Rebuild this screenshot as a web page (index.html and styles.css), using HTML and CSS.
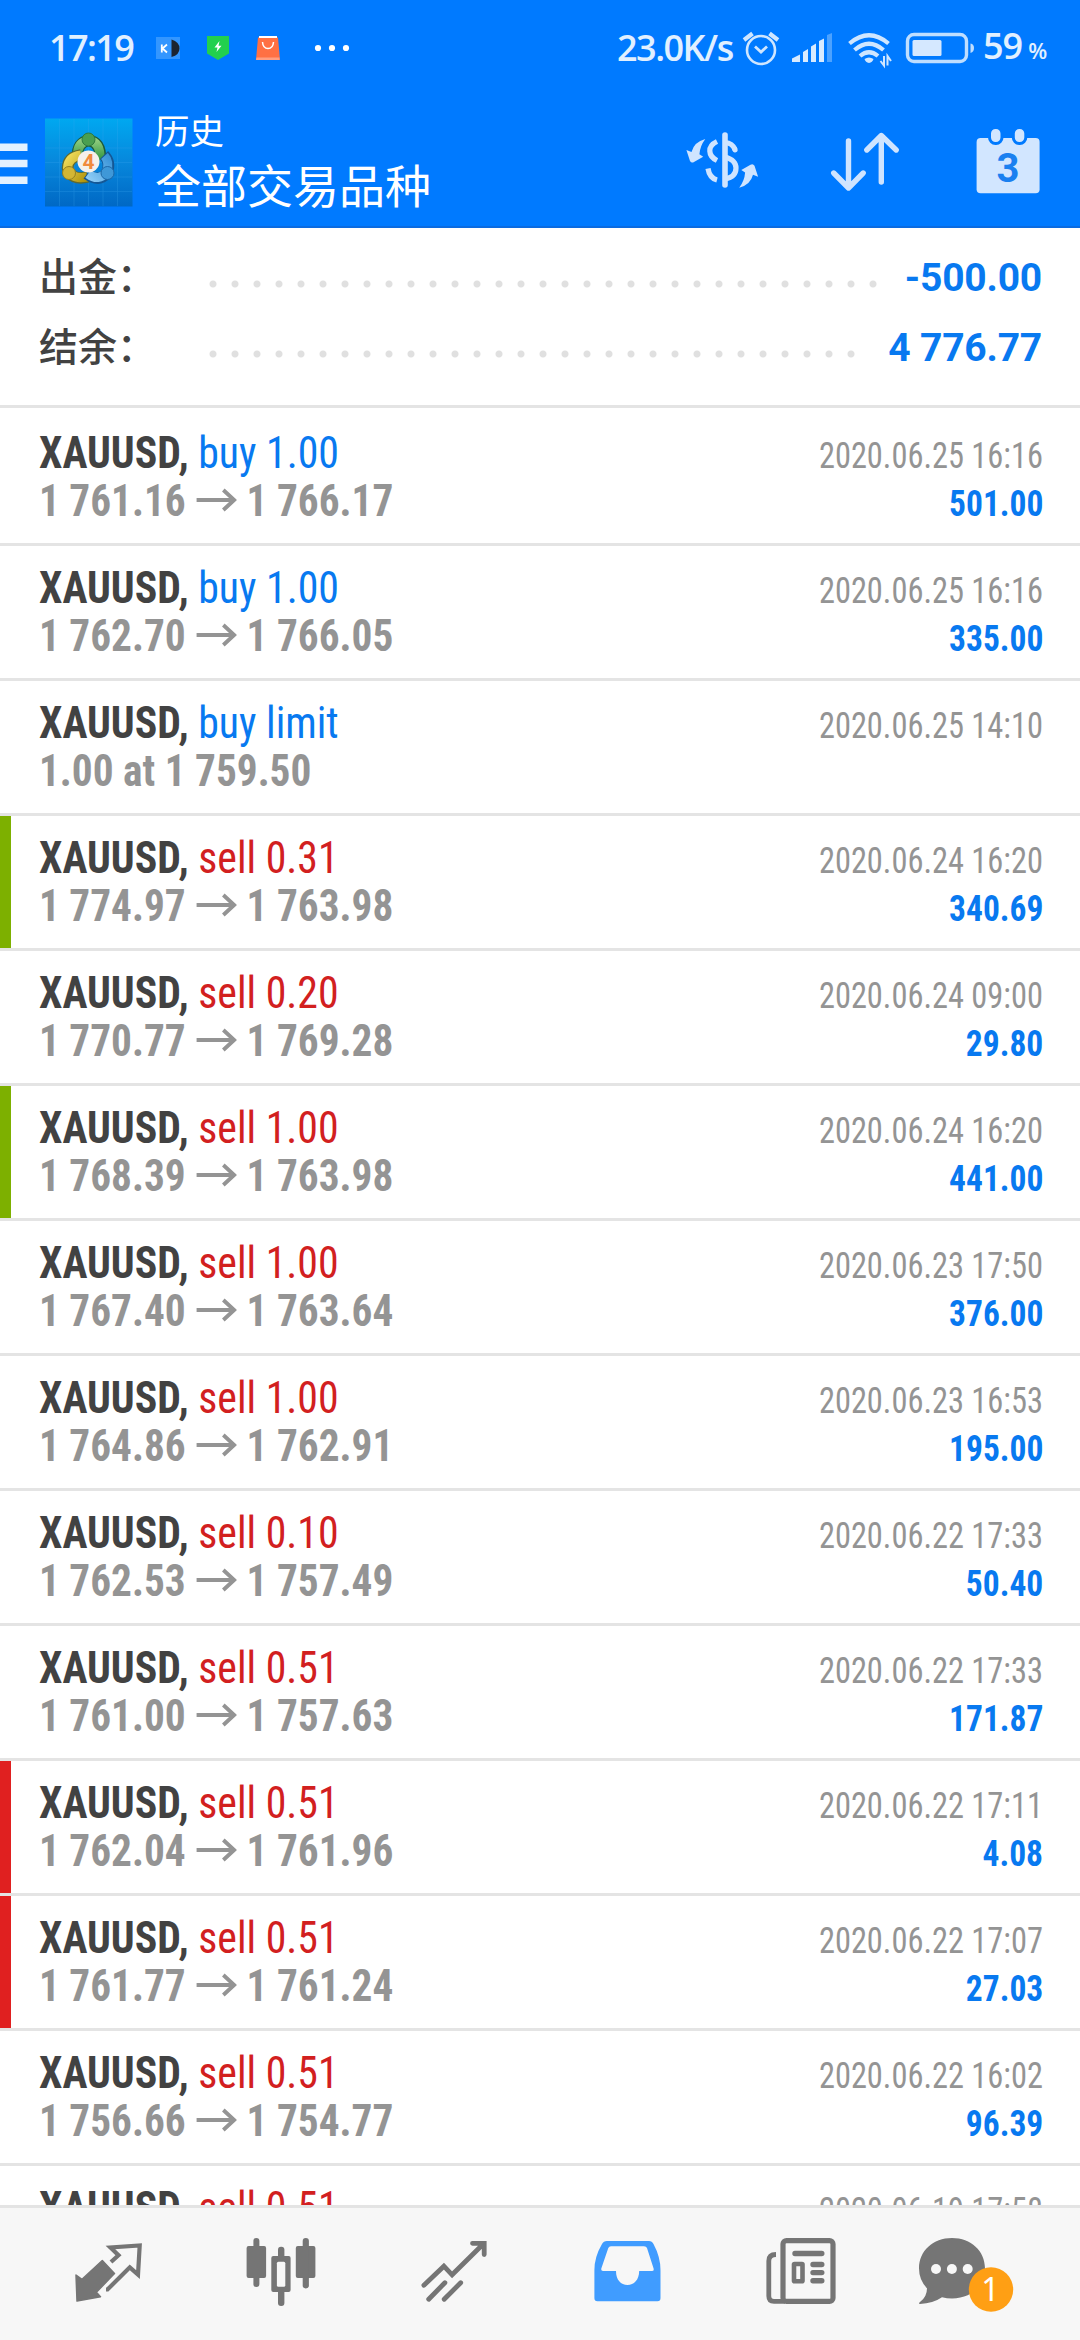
FILE: index.html
```html
<!DOCTYPE html>
<html lang="zh-CN">
<head>
<meta charset="utf-8">
<title>历史</title>
<link rel="stylesheet" href="styles.css">
</head>
<body>
<svg class="defs" width="0" height="0"><symbol id="arrow" viewBox="0 0 44 24"><path d="M1 12H41M29.500 2L41 12L29.500 22" fill="none" stroke="#949494" stroke-width="4.200"/></symbol></svg>
<div class="screen">
<header class="header">
  <div class="status">
    <span class="clock">17:19</span>
    <svg class="notices" width="200" height="28" viewBox="0 0 200 28">
      <rect x="0" y="3" width="24" height="22" fill="#3396ff"/>
      <path d="M15.500 5.500Q23.500 8 23.500 14.500T15.500 23Z" fill="#1c2430"/>
      <path d="M5.800 10.500V18.500M11 10.500L6.500 14.500L11 18.500" fill="none" stroke="#fff" stroke-width="1.800"/>
      <path d="M51 2H73V19.500L62 26L51 19.500Z" fill="#22d04e"/>
      <path d="M63.500 7L58.500 13.500H61.500L60.500 18L65.500 11.800H62.500Z" fill="#fff"/>
      <path d="M102 3.500H122L124 26H100Z" fill="#ff7043"/>
      <path d="M103 3H121" stroke="#fff" stroke-width="2"/>
      <path d="M100.500 23.500H123.500V26H100Z" fill="#ff9d80"/>
      <path d="M106.500 8Q107 14.500 112 14.500T117.500 8" fill="none" stroke="#fff" stroke-width="1.500"/>
      <g fill="#fff"><circle cx="162" cy="14" r="3.100"/><circle cx="176" cy="14" r="3.100"/><circle cx="190" cy="14" r="3.100"/></g>
    </svg>
    <span class="speed">23.0K/s</span>
    <svg class="sys" width="236" height="42" viewBox="740 27 236 42">
      <g fill="none" stroke="#cfe6ff" stroke-width="2.600">
        <circle cx="760" cy="50" r="14"/>
        <path d="M754 46.500L760 52L766 46.500" stroke-width="2.800"/>
        <path d="M743 40L751.500 33.500M777 40L768.500 33.500" stroke-width="4.200"/>
      </g>
      <path d="M791 62V58.500L799 54.500V62ZM802 62V52L807 49V62ZM810 62V46.500L815 43.500V62ZM818 62V41L823 38.500V62Z" fill="#d9ebff"/>
      <path d="M826 62V35L831 33V62Z" fill="#4ca2ff"/>
      <g fill="none" stroke="#cfe6ff" stroke-width="4.200">
        <path d="M848.500 43.500Q868 27 887.500 43.500"/><path d="M853.500 50Q868 37.500 882.500 50"/><path d="M859 56Q868 48.500 877 56"/>
      </g>
      <path d="M863.500 59Q868 56 872.500 59Q871.500 62.500 868 63Q864.500 62.500 863.500 59Z" fill="#cfe6ff"/>
      <path d="M883 56V65.500L879.500 61M886.500 65.500V56L890 61" fill="none" stroke="#cfe6ff" stroke-width="2"/>
      <rect x="906.500" y="34.500" width="59" height="27" rx="6.500" fill="none" stroke="#bfdeff" stroke-width="3.400"/>
      <rect x="911.500" y="40" width="29" height="16" rx="1.500" fill="#d5e8ff"/>
      <path d="M969.500 43.500Q973 44 973 48T969.500 53Z" fill="#bfdeff"/>
    </svg>
    <span class="battery">59<small>%</small></span>
  </div>
  <div class="toolbar">
    <svg width="28" height="132" viewBox="0 0 28 132"><path d="M0 51.200H27.500M0 67.500H27.500M0 84.200H27.500" stroke="#e3f1ff" stroke-width="7.400"/></svg>
    <svg class="logo" width="88" height="132" viewBox="0 0 88 132">
      <defs>
        <linearGradient id="sky" x1="0" y1="0" x2="0" y2="1"><stop offset="0" stop-color="#00a8f0"/><stop offset=".5" stop-color="#0787dc"/><stop offset="1" stop-color="#0068c4"/></linearGradient>
        <linearGradient id="green" x1="0" y1="0" x2="0" y2="1"><stop offset="0" stop-color="#8ecb7c"/><stop offset="1" stop-color="#2f9440"/></linearGradient>
        <linearGradient id="gold" x1="0" y1="0" x2="1" y2="1"><stop offset="0" stop-color="#f0dc5a"/><stop offset="1" stop-color="#b3960f"/></linearGradient>
        <linearGradient id="blue" x1="1" y1="0" x2="0" y2="1"><stop offset="0" stop-color="#3a94d8"/><stop offset="1" stop-color="#8ccbf5"/></linearGradient>
      </defs>
      <rect x="0" y="22.500" width="87.500" height="88" fill="url(#sky)"/>
      <path d="M14.500 23V110M29 23V110M43.500 23V110M58 23V110M72.500 23V110M0 52H87M0 66.500H87M0 81H87M0 95.500H87" stroke="#3faaf0" stroke-width=".7" opacity=".35"/>
      <path d="M32.500 61Q32 46 44 44.500Q56 46 55.500 64" fill="none" stroke="#1d5b3b" stroke-width="11.500"/>
      <path d="M32.500 60Q32 46 44 44.500Q56 46 55 64" fill="none" stroke="url(#green)" stroke-width="9"/>
      <path d="M36 59Q23 61 22.500 72Q26 85 43 81" fill="none" stroke="#5f6a30" stroke-width="11.500"/>
      <path d="M36 59Q23 61 22.500 72Q26 84 42 81" fill="none" stroke="url(#gold)" stroke-width="9"/>
      <path d="M59 59Q66 66 62 77Q54 87 42 78" fill="none" stroke="#145795" stroke-width="11.500"/>
      <path d="M59.500 60Q65 66 61.500 76Q54 86 43 78" fill="none" stroke="url(#blue)" stroke-width="9"/>
      <circle cx="43.500" cy="43.500" r="6.500" fill="#4a9f50" stroke="#2e7a40" stroke-width="1"/><circle cx="24" cy="77" r="6.500" fill="#d3b634" stroke="#93801f" stroke-width="1"/><circle cx="62.500" cy="77" r="6.500" fill="#3f98d8" stroke="#1d68a8" stroke-width="1"/>
      <circle cx="43.500" cy="65.500" r="11" fill="#f5f0ea"/>
      <text class="logo-num" x="43.500" y="73" text-anchor="middle">4</text>
    </svg>
    <div class="titles"><div class="title">历史</div><div class="subtitle">全部交易品种</div></div>
    <svg class="ico-money" width="90" height="132" viewBox="0 -28 90 132">
      <g fill="none" stroke="#cfe4ff" stroke-width="5.200">
        <path d="M45 11V61" stroke-linecap="round" stroke-width="5.600"/>
        <path d="M37 17.500Q29.500 21 29.800 27Q30 33 37 36.500M28 44.500Q29.500 54 37 56M45 18.500Q52.500 19 55 25.500M45 33Q56 36 56 44Q56 53 45 55"/>
        <path d="M54.700 25L55 25.800" stroke-linecap="round"/>
      </g>
      <g fill="#cfe4ff"><path id="swap" d="M25.300 15Q14 18 11.500 28L6.400 26L10 37Q11.500 39.500 14 38L23.200 32.700L19.400 30.300Q20 22 25.300 15Z"/><use href="#swap" transform="rotate(180 42.250 39.350)"/></g>
    </svg>
    <svg class="ico-sort" width="76" height="132" viewBox="0 0 76 132"><path d="M22.500 45V91M7.700 77L22.500 92L37.200 77M55.300 86V40M40.800 54L55.300 39.500L70.200 54" fill="none" stroke="#cfe4ff" stroke-width="5.400" stroke-linecap="round" stroke-linejoin="round"/></svg>
    <svg class="ico-cal" width="72" height="132" viewBox="0 0 72 132">
      <rect x="4.600" y="42" width="63" height="55.300" rx="4" fill="#d2e6ff"/>
      <g fill="#d2e6ff" stroke="#007aff" stroke-width="3"><rect x="17.500" y="31.500" width="12.500" height="16" rx="6"/><rect x="41.300" y="31.500" width="12.500" height="16" rx="6"/></g>
      <text class="cal-num" x="36" y="86" text-anchor="middle">3</text>
    </svg>
  </div>
</header>
<section class="summary">
  <div class="sum-row"><span class="sum-label">出金：</span><i class="dots"></i><b class="sum-value">-500.00</b></div>
  <div class="sum-row"><span class="sum-label">结余：</span><i class="dots"></i><b class="sum-value">4 776.77</b></div>
</section>
<main class="list">
  <article class="deal"><div class="line"><span class="order"><b class="symbol">XAUUSD,</b> <span class="buy">buy 1.00</span></span><time>2020.06.25 16:16</time></div><div class="line"><b class="price">1 761.16<svg class="to"><use href="#arrow"/></svg>1 766.17</b><b class="profit">501.00</b></div></article>
  <article class="deal"><div class="line"><span class="order"><b class="symbol">XAUUSD,</b> <span class="buy">buy 1.00</span></span><time>2020.06.25 16:16</time></div><div class="line"><b class="price">1 762.70<svg class="to"><use href="#arrow"/></svg>1 766.05</b><b class="profit">335.00</b></div></article>
  <article class="deal"><div class="line"><span class="order"><b class="symbol">XAUUSD,</b> <span class="buy">buy limit</span></span><time>2020.06.25 14:10</time></div><div class="line"><b class="price">1.00 at 1 759.50</b></div></article>
  <article class="deal tp"><div class="line"><span class="order"><b class="symbol">XAUUSD,</b> <span class="sell">sell 0.31</span></span><time>2020.06.24 16:20</time></div><div class="line"><b class="price">1 774.97<svg class="to"><use href="#arrow"/></svg>1 763.98</b><b class="profit">340.69</b></div></article>
  <article class="deal"><div class="line"><span class="order"><b class="symbol">XAUUSD,</b> <span class="sell">sell 0.20</span></span><time>2020.06.24 09:00</time></div><div class="line"><b class="price">1 770.77<svg class="to"><use href="#arrow"/></svg>1 769.28</b><b class="profit">29.80</b></div></article>
  <article class="deal tp"><div class="line"><span class="order"><b class="symbol">XAUUSD,</b> <span class="sell">sell 1.00</span></span><time>2020.06.24 16:20</time></div><div class="line"><b class="price">1 768.39<svg class="to"><use href="#arrow"/></svg>1 763.98</b><b class="profit">441.00</b></div></article>
  <article class="deal"><div class="line"><span class="order"><b class="symbol">XAUUSD,</b> <span class="sell">sell 1.00</span></span><time>2020.06.23 17:50</time></div><div class="line"><b class="price">1 767.40<svg class="to"><use href="#arrow"/></svg>1 763.64</b><b class="profit">376.00</b></div></article>
  <article class="deal"><div class="line"><span class="order"><b class="symbol">XAUUSD,</b> <span class="sell">sell 1.00</span></span><time>2020.06.23 16:53</time></div><div class="line"><b class="price">1 764.86<svg class="to"><use href="#arrow"/></svg>1 762.91</b><b class="profit">195.00</b></div></article>
  <article class="deal"><div class="line"><span class="order"><b class="symbol">XAUUSD,</b> <span class="sell">sell 0.10</span></span><time>2020.06.22 17:33</time></div><div class="line"><b class="price">1 762.53<svg class="to"><use href="#arrow"/></svg>1 757.49</b><b class="profit">50.40</b></div></article>
  <article class="deal"><div class="line"><span class="order"><b class="symbol">XAUUSD,</b> <span class="sell">sell 0.51</span></span><time>2020.06.22 17:33</time></div><div class="line"><b class="price">1 761.00<svg class="to"><use href="#arrow"/></svg>1 757.63</b><b class="profit">171.87</b></div></article>
  <article class="deal sl"><div class="line"><span class="order"><b class="symbol">XAUUSD,</b> <span class="sell">sell 0.51</span></span><time>2020.06.22 17:11</time></div><div class="line"><b class="price">1 762.04<svg class="to"><use href="#arrow"/></svg>1 761.96</b><b class="profit">4.08</b></div></article>
  <article class="deal sl"><div class="line"><span class="order"><b class="symbol">XAUUSD,</b> <span class="sell">sell 0.51</span></span><time>2020.06.22 17:07</time></div><div class="line"><b class="price">1 761.77<svg class="to"><use href="#arrow"/></svg>1 761.24</b><b class="profit">27.03</b></div></article>
  <article class="deal"><div class="line"><span class="order"><b class="symbol">XAUUSD,</b> <span class="sell">sell 0.51</span></span><time>2020.06.22 16:02</time></div><div class="line"><b class="price">1 756.66<svg class="to"><use href="#arrow"/></svg>1 754.77</b><b class="profit">96.39</b></div></article>
  <article class="deal"><div class="line"><span class="order"><b class="symbol">XAUUSD,</b> <span class="sell">sell 0.51</span></span><time>2020.06.19 17:58</time></div></article>
</main>
<nav class="nav">
  <svg viewBox="0 0 173.300 132"><path d="M56 67L62 71.300L82.300 52.500L94.500 65.500L76.400 84.300L80.500 88.700L57 93Z" fill="#757575" stroke="#757575" stroke-width="1.500" stroke-linejoin="round"/><path d="M91 54L98.500 47.200L90.500 39.500L119.700 37.500L118 66.500L109.800 59.300L87.500 81.500H86" fill="none" stroke="#757575" stroke-width="4.200"/></svg>
  <svg viewBox="0 0 173.300 132"><g fill="#757575"><rect x="53.600" y="38" width="19.500" height="32" rx="2"/><rect x="60.400" y="30" width="6" height="49" rx="3"/><rect x="102.800" y="38" width="19.600" height="32" rx="2"/><rect x="109.700" y="30" width="6.200" height="50.500" rx="3"/><rect x="85" y="38.700" width="6.400" height="59.300" rx="3"/><rect x="78.300" y="48" width="19.300" height="36" rx="2"/></g><rect x="83.900" y="53.700" width="8.400" height="25" rx="1.500" fill="#f7f7f7"/></svg>
  <svg viewBox="0 0 173.300 132"><path d="M56.900 77.300L76.900 58.200L85.100 66.800L116.500 35.800M77.900 74.700L61.700 91.300M93.700 74.700L77.200 91.300M105.500 35.300H117.200V46.500" fill="none" stroke="#757575" stroke-width="4.800" stroke-linecap="round"/></svg>
  <svg viewBox="0 0 173.300 132"><path fill-rule="evenodd" d="M67 33H109Q112 33 113.500 36Q120.500 49 120.500 62V90Q120.500 93.300 117.500 93.300H57.400Q54.400 93.300 54.400 90V62Q54.400 49 62 36Q63.500 33 67 33ZM71 38.300Q69 38.500 68.300 40L61.300 60.500Q60.800 62.800 63 63H76C76 72 81 77 87.500 77S99 72 99.200 63H112Q114.200 62.800 113.600 60.500L107 40Q106.300 38.300 104 38.300Z" fill="#409cff"/></svg>
  <svg viewBox="0 0 173.300 132"><g fill="none" stroke="#757575" stroke-width="5.200"><rect x="70" y="32.600" width="50" height="60.800" rx="3.500"/><path d="M63 46.500Q55.800 46.500 55.800 53V88Q55.800 93.400 61 93.400H72" stroke-width="4.800"/><rect x="81" y="56" width="8.500" height="17.300" rx=".5" stroke-width="4.600"/><path d="M82 45.500H108.800M100 56.500H108.800M100 64.600H108.800M100 72.800H108.800" stroke-width="5.400" stroke-linecap="round"/></g></svg>
  <svg viewBox="0 0 173.300 132"><path d="M66 30C85 30 99 43 99 60.300S85 90.500 66 90.500Q61 90.500 56 89.300Q47 95.500 34 96Q32 95.500 34 94Q41 89 41 80.300Q33 72 33 60.300C33 43 47 30 66 30Z" fill="#757575"/><g fill="#f7f7f7"><circle cx="50" cy="61" r="5"/><circle cx="65.900" cy="61" r="5"/><circle cx="81.700" cy="61" r="5"/></g><circle cx="105" cy="81.500" r="22.200" fill="#ff9f14"/><text class="badge" x="104.500" y="93" text-anchor="middle">1</text></svg>
</nav>
</div>
</body>
</html>
```
FILE: styles.css
```css
* { box-sizing: border-box; }
body { margin: 0; background: #fff; }
svg { display: block; flex: none; }
.defs { position: absolute; }
.screen { width: 1080px; height: 2340px; display: flex; flex-direction: column; overflow: hidden; font-family: "Roboto Condensed", Roboto, sans-serif; }

.header { flex: none; height: 228px; background: #007aff; border-bottom: 2px solid #0b6be0; }
.status { height: 96px; display: flex; align-items: center; padding-left: 49px; color: #e1f0ff; font: 600 36px/96px "Open Sans", "Noto Sans", sans-serif; }
.clock { width: 107px; letter-spacing: -1.6px; }
.speed { width: 118px; margin-left: 261px; white-space: nowrap; letter-spacing: -1.5px; }
.sys { margin-left: 6px; }
.battery { margin-left: 6px; white-space: nowrap; letter-spacing: -1px; }
.battery small { font-size: 22px; margin-left: 6px; }
.toolbar { height: 130px; display: flex; align-items: flex-start; }
.logo { margin-left: 17px; }
.logo-num { font: 700 21px Roboto, sans-serif; fill: #f08a3c; }
.titles { width: 280px; margin-left: 22px; padding-top: 9px; color: #fff; font-family: "Noto Sans CJK SC", sans-serif; white-space: nowrap; }
.title { font-size: 34.5px; line-height: 48px; }
.subtitle { font-size: 46px; line-height: 61px; }
.ico-money { margin-left: 245px; }
.ico-sort { margin-left: 56px; }
.ico-cal { margin-left: 70px; }
.cal-num { font: 700 40px Roboto, sans-serif; fill: #1a80f0; }

.summary { flex: none; height: 180px; padding: 11px 38px 0 39px; border-bottom: 3px solid #e4e4e4; }
.sum-row { display: flex; align-items: center; height: 70px; }
.sum-label { width: 163px; color: #424242; font: 500 39px/70px "Noto Sans CJK SC", sans-serif; white-space: nowrap; }
.dots { flex: 1; height: 8px; margin: 20px 20px 0 0; background: radial-gradient(circle at 11px 4px, #e0e0e0 3px, transparent 4px) 0 0 / 22px 8px repeat-x; }
.sum-value { padding-top: 9px; color: #0879f0; font: 700 39px/61px Roboto, sans-serif; letter-spacing: -0.2px; }

.list { flex: 1; min-height: 0; overflow: hidden; padding-top: 3px; }
.deal { height: 135px; padding: 18px 37px 0 39px; border-bottom: 3px solid #e4e4e4; }
.tp { box-shadow: inset 11px 0 #7db000; }
.sl { box-shadow: inset 11px 0 #e02020; }
.line { display: flex; justify-content: space-between; align-items: baseline; height: 48px; font-size: 44px; line-height: 48px; white-space: nowrap; }
/* Figures and tickers are set tighter than the condensed face */
.order { transform: scaleX(.95); transform-origin: left; }
.symbol { color: #424242; }
.buy { color: #0879f0; }
.sell { color: #d2201f; }
.price { display: flex; color: #949494; transform: scaleX(.938); transform-origin: left; }
.to { width: 44px; height: 24px; margin: 11px 10px 0 11px; }
time { color: #949494; font-size: 36px; transform: scaleX(.9); transform-origin: right; }
.profit { color: #0879f0; font-size: 36px; transform: scaleX(.93); transform-origin: right; }

.nav { flex: none; height: 135px; padding: 0 20px; display: flex; background: #f7f7f7; border-top: 3px solid #e4e4e4; }
.nav svg { width: 173.3px; height: 132px; }
.badge { font: 400 32px "Noto Sans", sans-serif; fill: #fff; }
```
